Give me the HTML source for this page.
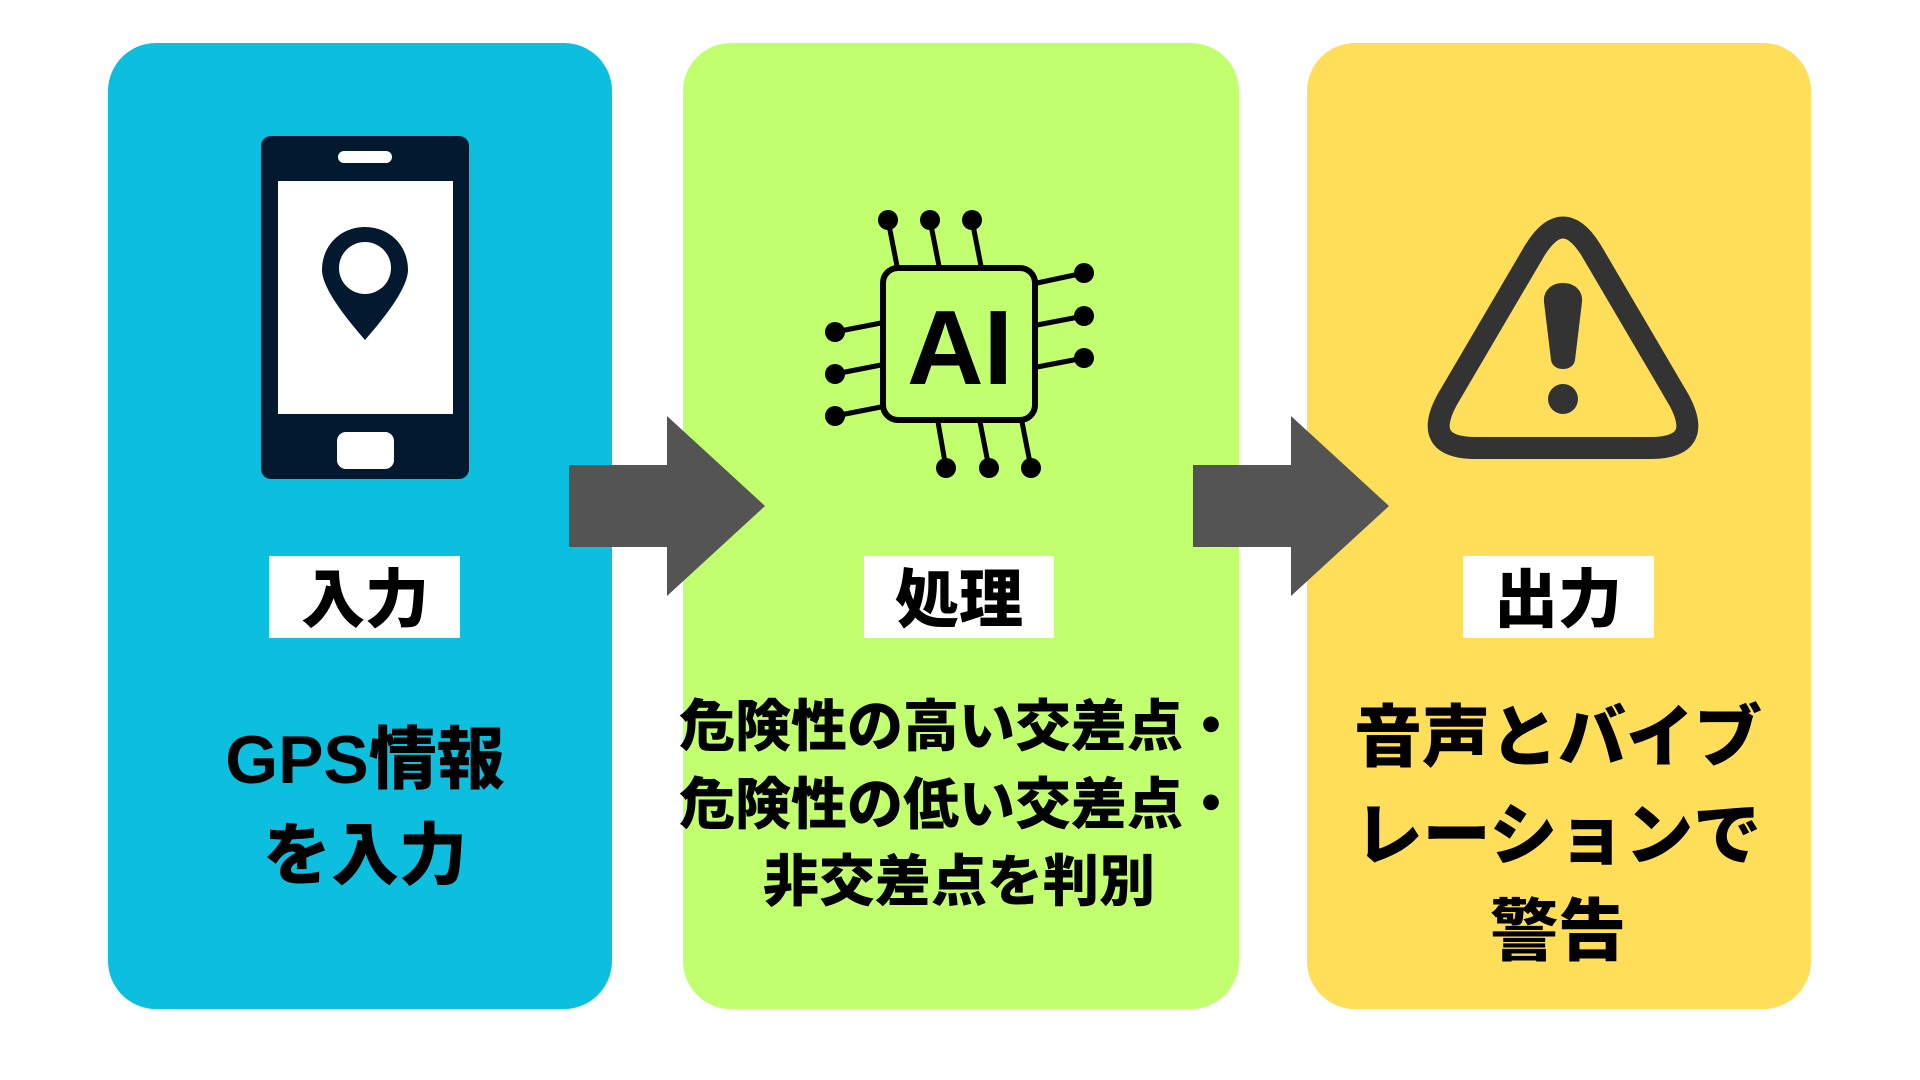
<!DOCTYPE html>
<html><head><meta charset="utf-8"><style>
html,body{margin:0;padding:0;background:#fff;width:1920px;height:1080px;overflow:hidden}
.t{font-family:"Liberation Sans","Noto Sans CJK JP",sans-serif;font-weight:900}
</style></head><body>
<svg width="1920" height="1080" viewBox="0 0 1920 1080" xmlns="http://www.w3.org/2000/svg">
<rect x="108" y="43" width="504" height="966" rx="48" fill="#0CBFDF"/>
<rect x="683" y="43" width="556" height="966" rx="48" fill="#C2FF6F"/>
<rect x="1307" y="43" width="504" height="966" rx="48" fill="#FFDE59"/>
<path d="M569 465H667V416L765 506L667 596V547H569Z" fill="#545454"/>
<path d="M1193 465H1291V416L1389 506L1291 596V547H1193Z" fill="#545454"/>
<rect x="261" y="136" width="208" height="343" rx="10" fill="#021930"/>
<rect x="278" y="181" width="175" height="233" fill="#fff"/>
<rect x="338" y="151" width="54" height="12" rx="6" fill="#fff"/>
<rect x="337" y="432" width="57" height="37" rx="9" fill="#fff"/>
<path d="M365 227c-24 0-43 18-43 43c0 20 30 55 43 70c13-15 43-50 43-70c0-25-19-43-43-43z" fill="#021930"/>
<circle cx="365" cy="268" r="26" fill="#fff"/>
<g stroke="#000" stroke-width="5" fill="none">
<rect x="883" y="268" width="152" height="152" rx="15" stroke-width="6"/>
<path d="M888 220L897 266M930 220L939 266M972 220L981 266M938 422L946 468M980 422L989 468M1022 422L1031 468M835 332L881 323M835 374L881 365M835 416L881 407M1037 283L1084 273M1037 325L1084 316M1037 367L1084 358"/>
</g>
<g fill="#000">
<circle cx="888" cy="220" r="10"/><circle cx="930" cy="220" r="10"/><circle cx="972" cy="220" r="10"/>
<circle cx="946" cy="468" r="10"/><circle cx="989" cy="468" r="10"/><circle cx="1031" cy="468" r="10"/>
<circle cx="835" cy="332" r="10"/><circle cx="835" cy="374" r="10"/><circle cx="835" cy="416" r="10"/>
<circle cx="1084" cy="273" r="10"/><circle cx="1084" cy="316" r="10"/><circle cx="1084" cy="358" r="10"/>
</g>
<text x="960" y="384" text-anchor="middle" font-family="Liberation Sans" font-weight="bold" font-size="106" fill="#000">AI</text>
<path d="M1535 250Q1563 205 1591 250L1679 400Q1705 448 1650 448L1476 448Q1421 448 1447 400Z" fill="none" stroke="#333" stroke-width="22" stroke-linejoin="round"/>
<path d="M1563 283c-12 0-20 8-19 19l7 58c1 6 6 9 12 9s11-3 12-9l7-58c1-11-7-19-19-19z" fill="#333"/>
<circle cx="1563" cy="399" r="15" fill="#333"/>
<rect x="269" y="556" width="191" height="82" fill="#fff"/>
<rect x="864" y="556" width="190" height="82" fill="#fff"/>
<rect x="1463" y="556" width="191" height="82" fill="#fff"/>
<g class="t" fill="#000" text-anchor="middle">
<text x="365" y="622" font-size="64">入力</text>
<text x="959" y="622" font-size="64">処理</text>
<text x="1558" y="622" font-size="64">出力</text>
<text x="365" y="783" font-size="68">GPS情報</text>
<text x="365" y="879" font-size="68">を入力</text>
<text x="959" y="746" font-size="56">危険性の高い交差点・</text>
<text x="959" y="824" font-size="56">危険性の低い交差点・</text>
<text x="959" y="901" font-size="56">非交差点を判別</text>
<text x="1558" y="761" font-size="68">音声とバイブ</text>
<text x="1558" y="859" font-size="68">レーションで</text>
<text x="1558" y="955" font-size="68">警告</text>
</g>
</svg>
</body></html>
